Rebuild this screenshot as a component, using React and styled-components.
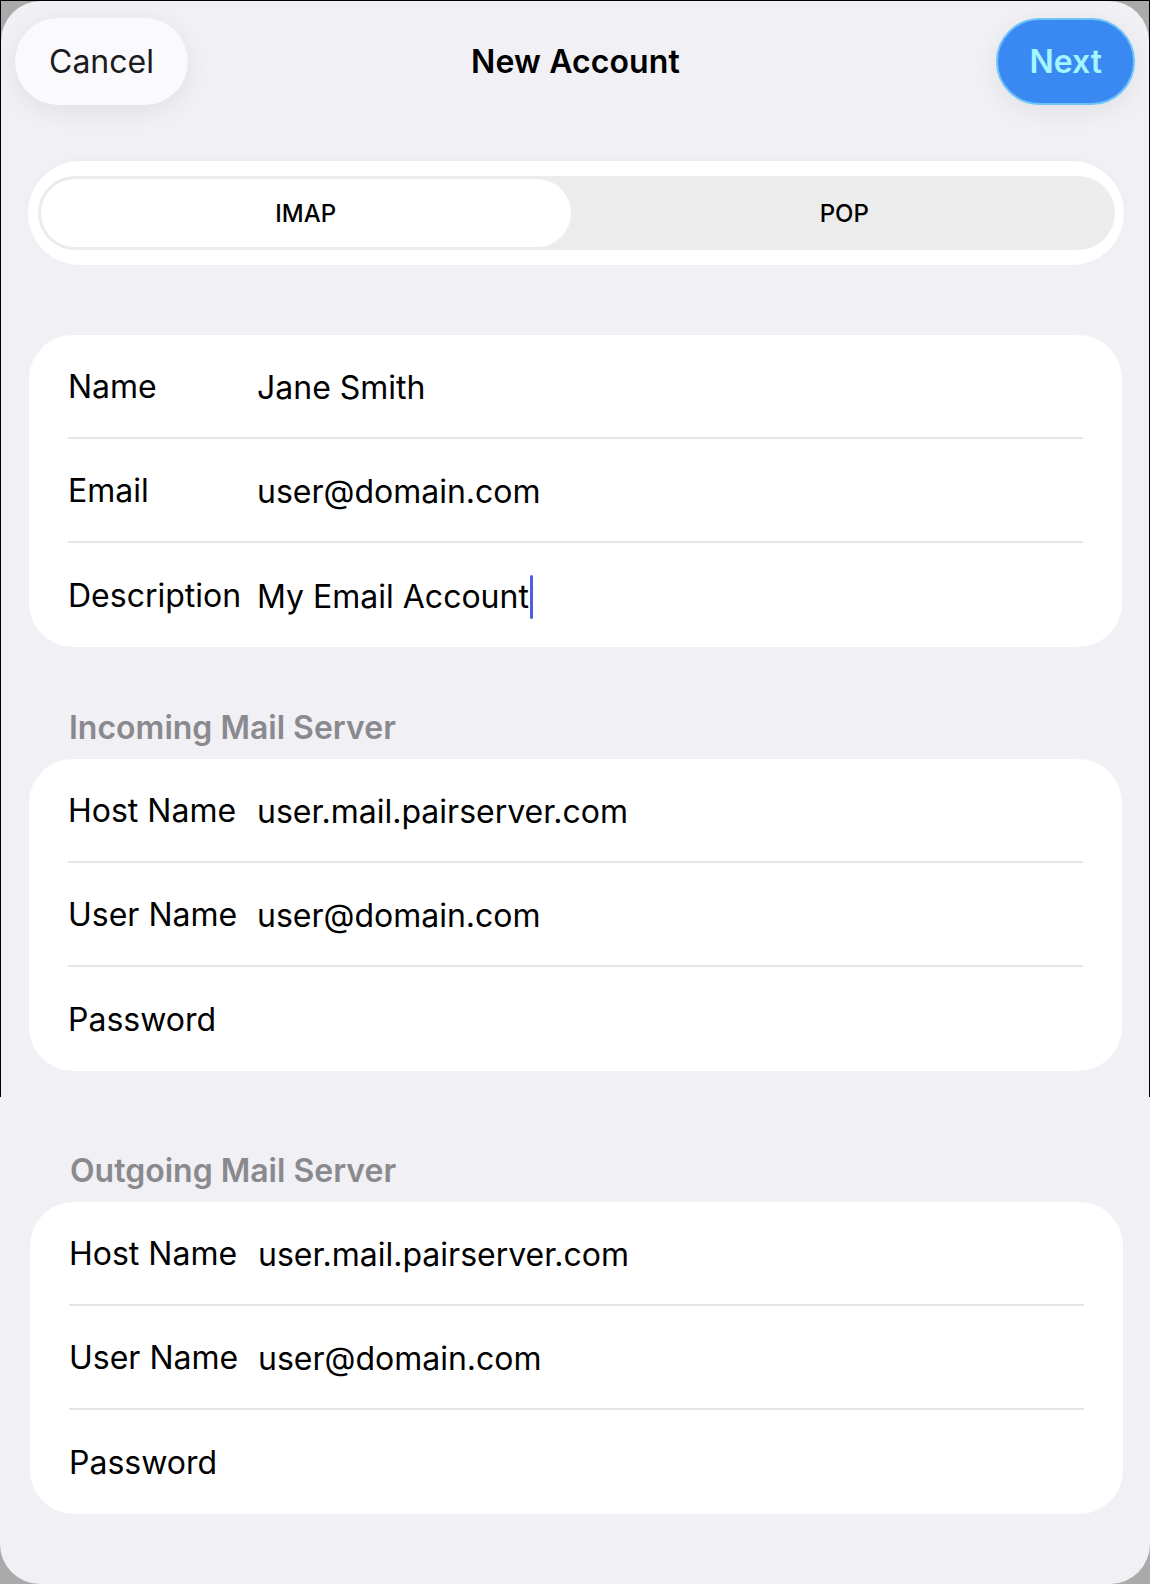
import React from 'react';
import styled, { createGlobalStyle } from 'styled-components';

const GlobalStyle = createGlobalStyle`
  html, body {
    margin: 0;
    padding: 0;
    background: #aaaaaa;
  }
  body {
    font-family: 'Inter', 'Liberation Sans', sans-serif;
    color: #000;
  }
  * { box-sizing: border-box; }
`;

const Page = styled.div`
  width: 1150px;
  height: 1584px;
  display: flex;
  flex-direction: column;
  background: #aaaaaa;
`;

const Frame = styled.div`
  display: flex;
  flex-direction: column;
  height: ${({ h }) => h}px;
  border: ${({ framed }) => (framed ? '1px solid #000' : 'none')};
  border-bottom: none;
  background: #aaaaaa;
`;

const Sheet = styled.div`
  flex: 1;
  display: flex;
  flex-direction: column;
  background: #f0f0f5;
  border-radius: ${({ top }) => (top ? '40px 40px 0 0' : '0 0 40px 40px')};
  padding: ${({ top }) => (top ? '17px 13px 0 14px' : '0 13px 0 16px')};
`;

const NavBar = styled.div`
  display: grid;
  grid-template-columns: 1fr auto 1fr;
  align-items: center;
  height: 87px;
`;

const NavButton = styled.button`
  height: 87px;
  padding: 0 ${({ primary }) => (primary ? '31px' : '34px')};
  border-radius: 44px;
  font-family: inherit;
  font-size: 32px;
  font-weight: ${({ primary }) => (primary ? 600 : 400)};
  cursor: pointer;
  justify-self: ${({ primary }) => (primary ? 'end' : 'start')};
  background: ${({ primary }) => (primary ? '#3a88f2' : '#fafafc')};
  color: ${({ primary }) => (primary ? '#a3f6ff' : '#1c1c1e')};
  border: ${({ primary }) => (primary ? '2px solid #6cc4fb' : 'none')};
  margin-right: ${({ primary }) => (primary ? '1px' : '0')};
  box-shadow: 0 6px 26px rgba(0, 0, 0, 0.07);
`;

const Title = styled.div`
  font-size: 32px;
  font-weight: 600;
  letter-spacing: 0.1px;
`;

const SegmentOuter = styled.div`
  margin: 56px 12px 0 13px;
  height: 104px;
  border-radius: 52px;
  background: #ffffff;
  padding: 15px 9px 15px 10px;
  box-shadow: 0 -2px 6px rgba(0, 0, 0, 0.02);
`;

const SegmentTrack = styled.div`
  height: 74px;
  border-radius: 37px;
  background: #ececec;
  padding: 3px;
  display: grid;
  grid-template-columns: 1fr 1fr;
`;

const Segment = styled.div`
  display: flex;
  align-items: center;
  justify-content: center;
  border-radius: 34px;
  font-size: 24px;
  font-weight: 500;
  background: ${({ active }) => (active ? '#ffffff' : 'transparent')};
  margin-right: ${({ active }) => (active ? '6px' : '0')};
`;

const Card = styled.div`
  margin: ${({ mt }) => mt}px 14px 0 14px;
  background: #ffffff;
  border-radius: 44px;
  display: flex;
  flex-direction: column;
`;

const Row = styled.div`
  display: grid;
  grid-template-columns: 189px 1fr;
  align-items: center;
  height: 104px;
  margin: 0 39px 0 39px;
  border-bottom: ${({ last }) => (last ? 'none' : '2px solid #e4e4e8')};
`;

const Label = styled.div`
  font-size: 32px;
`;

const Value = styled.div`
  font-size: 32px;
  padding-top: 3px;
  display: flex;
  align-items: center;
`;

const Cursor = styled.span`
  display: inline-block;
  width: 3px;
  height: 44px;
  margin-left: 1px;
  border-radius: 2px;
  background: #4c5fe3;
`;

const SectionHeader = styled.div`
  margin: ${({ mt }) => mt}px 0 0 54px;
  font-size: 32px;
  font-weight: 600;
  color: #8a8a8e;
  line-height: 36px;
`;

const FieldCard = ({ rows, mt }) => (
  <Card mt={mt}>
    {rows.map((r, i) => (
      <Row key={r.label} last={i === rows.length - 1}>
        <Label>{r.label}</Label>
        <Value>
          {r.value}
          {r.cursor && <Cursor />}
        </Value>
      </Row>
    ))}
  </Card>
);

const serverRows = [
  { label: 'Host Name', value: 'user.mail.pairserver.com' },
  { label: 'User Name', value: 'user@domain.com' },
  { label: 'Password', value: '' },
];

export default function App() {
  return (
    <Page>
      <GlobalStyle />
      <Frame framed h={1097}>
        <Sheet top>
          <NavBar>
            <NavButton>Cancel</NavButton>
            <Title>New Account</Title>
            <NavButton primary>Next</NavButton>
          </NavBar>

          <SegmentOuter>
            <SegmentTrack>
              <Segment active>IMAP</Segment>
              <Segment>POP</Segment>
            </SegmentTrack>
          </SegmentOuter>

          <FieldCard
            mt={70}
            rows={[
              { label: 'Name', value: 'Jane Smith' },
              { label: 'Email', value: 'user@domain.com' },
              { label: 'Description', value: 'My Email Account', cursor: true },
            ]}
          />

          <SectionHeader mt={63}>Incoming Mail Server</SectionHeader>
          <FieldCard mt={13} rows={serverRows} />
        </Sheet>
      </Frame>
      <Frame h={487}>
        <Sheet>
          <SectionHeader mt={56}>Outgoing Mail Server</SectionHeader>
          <FieldCard mt={13} rows={serverRows} />
        </Sheet>
      </Frame>
    </Page>
  );
}
